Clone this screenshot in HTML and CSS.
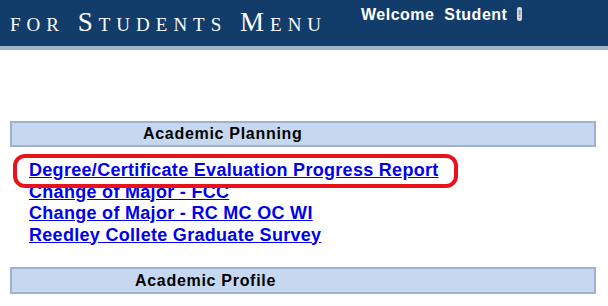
FILE: index.html
```html
<!DOCTYPE html>
<html lang="en">
<head>
    <meta charset="UTF-8">
    <title>for Students Menu</title>
    <link rel="stylesheet" href="styles.css">
</head>
<body>
    <div class="header">
        <h1 class="title">for Students Menu</h1>
        <div class="welcome">Welcome&nbsp; Student<span class="bang">!</span></div>
    </div>

    <div class="content">
        <div class="section-bar planning">Academic Planning</div>

        <ul class="links">
            <li class="marked"><a href="#">Degree/Certificate Evaluation Progress Report</a></li>
            <li><a href="#">Change of Major - FCC</a></li>
            <li><a href="#">Change of Major - RC MC OC WI</a></li>
            <li><a href="#">Reedley Collete Graduate Survey</a></li>
        </ul>

        <div class="section-bar profile">Academic Profile</div>
    </div>
</body>
</html>
```

FILE: styles.css
```css
body {
    margin: 0;
    background-color: #fff;
    font-family: "Liberation Sans", Arial, sans-serif;
}

/* Kopfzeile */
.header {
    height: 46px;
    background-color: #123d6b;
    border-bottom: 4px solid #9fb3cc;
    display: flex;
    align-items: flex-start;
}
.title {
    width: 318px;
    margin: 7px 0 0 10px;
    font-family: "Liberation Serif", "Times New Roman", serif;
    font-variant: small-caps;
    font-weight: normal;
    font-size: 27px;
    letter-spacing: 6px;
    white-space: nowrap;
    color: #fff;
}
.welcome {
    margin: 6px 0 0 33px;
    font-size: 16px;
    font-weight: bold;
    letter-spacing: 0.5px;
    color: #fff;
}
.bang {
    display: inline-block;
    margin-left: 10px;
    width: 5px;
    height: 14px;
    border-radius: 2px;
    background-color: #d3d6dc;
    color: #8a9099;
    font-size: 11px;
    line-height: 14px;
    text-align: center;
    vertical-align: -1px;
    overflow: hidden;
}

.content {
    padding: 71px 12px 0 10px;
}

/* Balken fuer Abschnitte */
.section-bar {
    height: 22px;
    line-height: 22px;
    border: 2px solid #9eb2cd;
    background-color: #c6d8ef;
    font-size: 16px;
    font-weight: bold;
    letter-spacing: 0.7px;
    color: #000;
}
.planning { padding-left: 131px; }
.profile {
    padding-left: 123px;
    height: 23px;
    line-height: 24px;
}

.links {
    list-style: none;
    margin: 13px 0 21px 0;
    padding: 0 0 0 19px;
}
.links li {
    line-height: 21.5px;
    font-size: 18px;
    font-weight: bold;
    letter-spacing: 0.3px;
}
.links a {
    color: #0000ee;
}

/* rote Markierung um den ersten Link */
.marked {
    position: relative;
}
.marked::before {
    content: "";
    position: absolute;
    left: -16px;
    top: -6px;
    width: 437px;
    height: 26px;
    border: 4px solid #e8121b;
    border-radius: 12px;
}
```
